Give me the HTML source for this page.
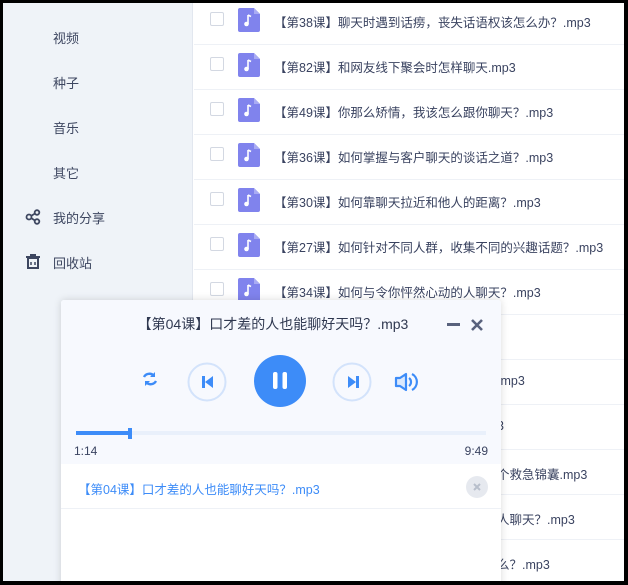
<!DOCTYPE html>
<html><head><meta charset="utf-8"><style>
*{margin:0;padding:0;box-sizing:border-box}
body{width:628px;height:585px;background:#000;position:relative;overflow:hidden;font-family:"Liberation Sans","Noto Sans CJK SC",sans-serif}
#app{position:absolute;left:3px;top:3px;width:621px;height:578px;background:#fff;overflow:hidden}
#side{position:absolute;left:0;top:0;width:190px;height:578px;background:#eff3f8;border-right:1px solid #e2e7ef}
.nav{position:absolute;left:50px;font-size:13px;color:#3d4660}
.row{position:absolute;left:191px;width:430px;height:45px;border-bottom:1px solid #eef1f6}
.cb{position:absolute;left:16px;top:12px;width:14px;height:14px;border:1px solid #d3d8e2;border-radius:2px;background:#fff}
.ic{position:absolute;left:44px;top:8px}
.tx{position:absolute;left:80px;top:12px;font-size:12.5px;color:#3a4360;white-space:nowrap}
.tail{position:absolute;font-size:12.5px;color:#3a4360;white-space:nowrap}
#pl{position:absolute;left:58px;top:297px;width:440px;height:290px;background:#fff;box-shadow:0 0 8px rgba(0,0,0,.15);border-radius:3px 3px 0 0}
#top{position:absolute;left:0;top:0;width:440px;height:164px;background:#f7f9fe;border-radius:3px 3px 0 0}
</style></head><body><div id="app">
<div id="side">
<div class="nav" style="top:25px">视频</div>
<div class="nav" style="top:70px">种子</div>
<div class="nav" style="top:115px">音乐</div>
<div class="nav" style="top:160px">其它</div>
<div class="nav" style="top:205px">我的分享</div>
<div class="nav" style="top:250px">回收站</div>
<svg style="position:absolute;left:22px;top:206px" width="16" height="16" viewBox="0 0 16 16" fill="none" stroke="#3d4660" stroke-width="1.8"><circle cx="4" cy="8" r="2.5"/><circle cx="12" cy="3.5" r="2.3"/><circle cx="12" cy="12.5" r="2.3"/><path d="M6 7l4-2.5M6 9l4 2.5"/></svg>
<svg style="position:absolute;left:23px;top:251px" width="14" height="16" viewBox="0 0 14 16" fill="none" stroke="#3d4660" stroke-width="2"><path d="M0 3h14M4 1h6"/><rect x="2" y="4" width="10" height="10"/><path d="M5 8v3M9 8v3" stroke-width="1.5"/></svg>
</div>
<div id="rows"></div>
<span class="tail" style="left:494px;top:371px">.mp3</span>
<span class="tail" style="left:494px;top:416px">3</span>
<span class="tail" style="left:494px;top:461px">个救急锦囊.mp3</span>
<span class="tail" style="left:494px;top:506px">人聊天？.mp3</span>
<span class="tail" style="left:494px;top:551px">么？.mp3</span>
<div id="pl">
<div id="top"></div>
<div style="position:absolute;left:-8px;width:440px;top:14px;text-align:center;font-size:14px;color:#2f3850">【第04课】口才差的人也能聊好天吗？.mp3</div>
<div style="position:absolute;left:386px;top:23px;width:13px;height:3px;background:#59627d"></div>
<svg style="position:absolute;left:410px;top:19px" width="12" height="12" viewBox="0 0 12 12" stroke="#59627d" stroke-width="2.6"><path d="M1 1l10 10M11 1L1 11"/></svg>
<svg style="position:absolute;left:-3px;top:50px" width="440" height="64" viewBox="0 0 440 64">
<g fill="none" stroke="#3d8cf8" stroke-width="2.4"><path d="M86 27a6 6 0 0 1 10-1M98 31a6 6 0 0 1-10 1"/></g>
<path d="M97 22v5h-5zM87 36v-5h5z" fill="#3d8cf8"/>
<circle cx="149" cy="32" r="18.5" fill="none" stroke="#d3e3fb" stroke-width="2"/>
<path d="M144 26h3v12h-3zM155 26v12l-8-6z" fill="#3d8cf8"/>
<circle cx="222" cy="31" r="26" fill="#3d8cf8"/>
<rect x="215" y="22" width="4.5" height="17" rx="2" fill="#fff"/><rect x="224.5" y="22" width="4.5" height="17" rx="2" fill="#fff"/>
<circle cx="294" cy="32" r="18.5" fill="none" stroke="#d3e3fb" stroke-width="2"/>
<path d="M290 26v12l8-6zM298 26h3v12h-3z" fill="#3d8cf8"/>
<path d="M338 28h4l6-4v16l-6-4h-4z" fill="#3d8cf8" fill-opacity=".15" stroke="#3d8cf8" stroke-width="2.2" stroke-linejoin="round"/>
<path d="M351 28a5 5 0 0 1 0 8M354 24a9 9 0 0 1 0 16" fill="none" stroke="#3d8cf8" stroke-width="2.2"/>
</svg>
<div style="position:absolute;left:15px;top:131px;width:410px;height:4px;background:#e9f0fb"></div>
<div style="position:absolute;left:15px;top:131px;width:54px;height:4px;background:#3d8cf8"></div>
<div style="position:absolute;left:67px;top:128px;width:4px;height:11px;background:#3d8cf8"></div>
<div style="position:absolute;left:13px;top:144px;font-size:12px;color:#3a4360">1:14</div>
<div style="position:absolute;right:13px;top:144px;font-size:12px;color:#3a4360">9:49</div>
<div style="position:absolute;left:17px;top:179px;font-size:12.5px;color:#3d8cf8">【第04课】口才差的人也能聊好天吗？.mp3</div>
<div style="position:absolute;left:405px;top:176px;width:22px;height:22px;border-radius:50%;background:#e6e9ef"></div>
<svg style="position:absolute;left:412px;top:183px" width="8" height="8" stroke="#b8bfcc" stroke-width="2"><path d="M1 1l6 6M7 1L1 7"/></svg>
<div style="position:absolute;left:0;top:208px;width:440px;height:1px;background:#eef1f6"></div>
</div>
</div>
<script>
var t=["【第38课】聊天时遇到话痨，丧失话语权该怎么办？.mp3","【第82课】和网友线下聚会时怎样聊天.mp3","【第49课】你那么矫情，我该怎么跟你聊天？.mp3","【第36课】如何掌握与客户聊天的谈话之道？.mp3","【第30课】如何靠聊天拉近和他人的距离？.mp3","【第27课】如何针对不同人群，收集不同的兴趣话题？.mp3","【第34课】如何与令你怦然心动的人聊天？.mp3","","","","","",""];
var h="";for(var i=0;i<13;i++){h+='<div class="row" style="top:'+(i*45-3)+'px"><div class="cb"></div><svg class="ic" width="22" height="24" viewBox="0 0 22 24"><path d="M2 0h14l6 6v16a2 2 0 0 1-2 2H2a2 2 0 0 1-2-2V2a2 2 0 0 1 2-2z" fill="#8083ed"/><path d="M16 0v6h6z" fill="#a9abf3"/><path d="M10 7v9" stroke="#fff" stroke-width="1.6"/><circle cx="8.5" cy="16" r="2.3" fill="#fff"/><path d="M10 7l3 1.5" stroke="#fff" stroke-width="1.6"/></svg><div class="tx">'+t[i]+'</div></div>';}
document.getElementById("rows").innerHTML=h;
</script>
</body></html>
